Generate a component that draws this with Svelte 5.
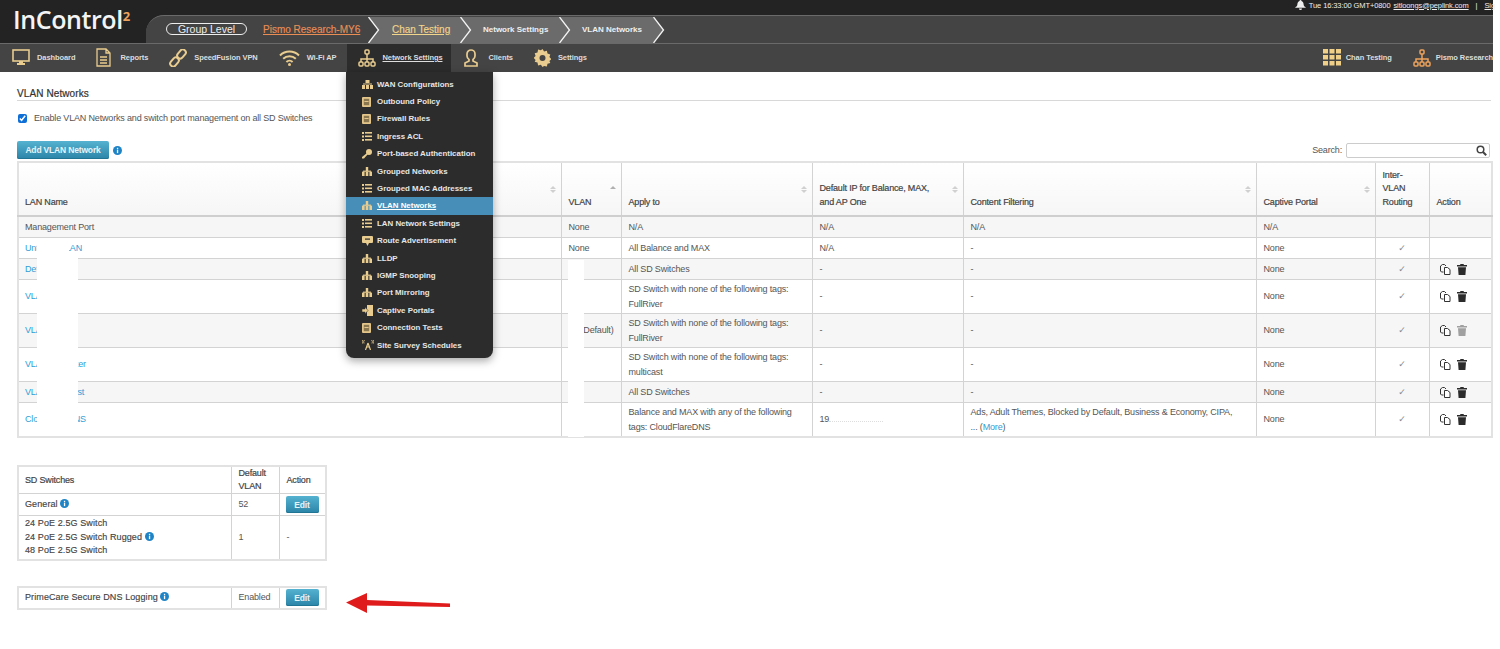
<script>
  const navItems = [
    { icon: 'monitor', label: 'Dashboard' },
    { icon: 'page', label: 'Reports' },
    { icon: 'link', label: 'SpeedFusion VPN' },
    { icon: 'wifi', label: 'Wi-Fi AP' },
    { icon: 'org', label: 'Network Settings', active: true },
    { icon: 'user', label: 'Clients' },
    { icon: 'gear', label: 'Settings' }
  ];

  const menuItems = [
    { icon: 'wan', label: 'WAN Configurations' },
    { icon: 'doc', label: 'Outbound Policy' },
    { icon: 'doc', label: 'Firewall Rules' },
    { icon: 'list', label: 'Ingress ACL' },
    { icon: 'key', label: 'Port-based Authentication' },
    { icon: 'net', label: 'Grouped Networks' },
    { icon: 'list', label: 'Grouped MAC Addresses' },
    { icon: 'net', label: 'VLAN Networks', active: true },
    { icon: 'list', label: 'LAN Network Settings' },
    { icon: 'route', label: 'Route Advertisement' },
    { icon: 'net', label: 'LLDP' },
    { icon: 'net', label: 'IGMP Snooping' },
    { icon: 'net', label: 'Port Mirroring' },
    { icon: 'portal', label: 'Captive Portals' },
    { icon: 'doc', label: 'Connection Tests' },
    { icon: 'survey', label: 'Site Survey Schedules' }
  ];

  const allSd = 'All SD Switches';
  const noneFull = 'SD Switch with none of the following tags: FullRiver';

  const rows = [
    { name: 'Management Port', vlan: 'None', apply: 'N/A', ip: 'N/A', filter: 'N/A', portal: 'N/A', plain: true },
    { name: 'Untagged LAN', link: true, vlan: 'None', apply: 'All Balance and MAX', ip: 'N/A', filter: '-', portal: 'None', check: true },
    { name: 'Default', link: true, vlan: '', apply: allSd, ip: '-', filter: '-', portal: 'None', check: true, actions: true },
    { name: 'VLAN', link: true, vlan: '', apply: noneFull, ip: '-', filter: '-', portal: 'None', check: true, actions: true, tall: true },
    { name: 'VLAN', link: true, vlan: '52 (Default)', apply: noneFull, ip: '-', filter: '-', portal: 'None', check: true, actions: true, tall: true, locked: true },
    { name: 'VLAN Repeater', link: true, vlan: '', apply: 'SD Switch with none of the following tags: multicast', ip: '-', filter: '-', portal: 'None', check: true, actions: true, tall: true },
    { name: 'VLAN Multicast', link: true, vlan: '', apply: allSd, ip: '-', filter: '-', portal: 'None', check: true, actions: true },
    { name: 'CloudFlareDNS', link: true, vlan: '', apply: 'Balance and MAX with any of the following tags: CloudFlareDNS', ip: 'masked', filter: 'more', portal: 'None', check: true, actions: true, tall: true }
  ];
</script>

{#snippet icon(kind)}
  {#if kind === 'monitor'}
    <svg width="18" height="17" viewBox="0 0 18 17"><rect x="1" y="1" width="16" height="11" fill="none" stroke="#e9cc8f" stroke-width="1.6"/><path d="M7 12h4v2h2v2H5v-2h2z" fill="#e9cc8f"/></svg>
  {:else if kind === 'page'}
    <svg width="17" height="19" viewBox="0 0 17 19"><path d="M1 1h9l4 4v13H1zM10 1v4h4M4 9h7M4 12h7M4 15h7" fill="none" stroke="#e9cc8f" stroke-width="1.3"/></svg>
  {:else if kind === 'link'}
    <svg width="18" height="18" viewBox="0 0 18 18"><g fill="none" stroke="#e9cc8f" stroke-width="2"><rect x="9.5" y="0" width="6" height="10" rx="3" transform="rotate(40 12.5 5)"/><rect x="2.5" y="8" width="6" height="10" rx="3" transform="rotate(40 5.5 13)"/></g></svg>
  {:else if kind === 'wifi'}
    <svg width="21" height="16" viewBox="0 0 21 16"><g fill="none" stroke="#e9cc8f" stroke-width="2"><path d="M1 5.5a13.5 13.5 0 0 1 19 0"/><path d="M4.2 8.8a9 9 0 0 1 12.6 0"/><path d="M7.4 12a4.5 4.5 0 0 1 6.2 0"/></g><circle cx="10.5" cy="14.5" r="1.5" fill="#e9cc8f"/></svg>
  {:else if kind === 'org' || kind === 'orgOrange'}
    <svg class:orange={kind === 'orgOrange'} class="org" width="18" height="18" viewBox="0 0 18 18"><g fill="none" stroke="currentColor" stroke-width="1.5"><rect x="7" y="1" width="4" height="4" rx="1"/><path d="M9 5v5M3 13v-3h12v3M9 10v3"/><rect x="1" y="13" width="4" height="4" rx="1"/><rect x="7" y="13" width="4" height="4" rx="1"/><rect x="13" y="13" width="4" height="4" rx="1"/></g></svg>
  {:else if kind === 'user'}
    <svg width="17" height="18" viewBox="0 0 17 18"><path d="M7 1a4 4 0 0 1 4 4v2a4 4 0 0 1-2 3.4V12l4 2v3H1v-3l4-2v-1.6A4 4 0 0 1 3 7V5a4 4 0 0 1 4-4z" fill="none" stroke="#e9cc8f" stroke-width="1.7"/></svg>
  {:else if kind === 'gear'}
    <svg width="17" height="18" viewBox="0 0 17 18"><path d="M8.5 0l1.6 2.4 2.8-.6.6 2.8 2.8.8-.9 2.7 2 2-2 2 .9 1.9-2.8.8-.6 2.8-2.8-.6L8.5 18l-1.6-2.2-2.8.6-.6-2.8-2.8-.8.9-1.9-2-2 2-2-.9-2.7 2.8-.8.6-2.8 2.8.6z" fill="#e9cc8f"/><circle cx="8.5" cy="9" r="3" fill="#444"/></svg>
  {:else if kind === 'grid'}
    <svg width="18" height="17" viewBox="0 0 18 17" fill="#f0d088"><rect width="5" height="4.5"/><rect x="6.5" width="5" height="4.5"/><rect x="13" width="5" height="4.5"/><rect y="6" width="5" height="4.5"/><rect x="6.5" y="6" width="5" height="4.5"/><rect x="13" y="6" width="5" height="4.5"/><rect y="12" width="5" height="4.5"/><rect x="6.5" y="12" width="5" height="4.5"/><rect x="13" y="12" width="5" height="4.5"/></svg>
  {:else if kind === 'wan'}
    <svg width="11" height="9" viewBox="0 0 11 9" fill="#e9cc8f"><rect x="3.5" width="4" height="3"/><rect y="5" width="3" height="4"/><rect x="4" y="5" width="3" height="4"/><rect x="8" y="5" width="3" height="4"/><rect x="1" y="3.5" width="9" height="1"/></svg>
  {:else if kind === 'doc'}
    <svg width="9" height="10" viewBox="0 0 9 10"><rect width="9" height="10" rx="1" fill="#e3c58a"/><rect x="1.800" y="1.800" width="5.400" height="6.400" fill="#8a7750"/><rect x="2.400" y="4" width="4.200" height="1" fill="#e3c58a"/></svg>
  {:else if kind === 'list'}
    <svg width="10" height="9" viewBox="0 0 10 9" fill="#e9cc8f"><rect width="2" height="2"/><rect x="3" width="7" height="1.6"/><rect y="3.5" width="2" height="2"/><rect x="3" y="3.5" width="7" height="1.6"/><rect y="7" width="2" height="2"/><rect x="3" y="7" width="7" height="1.6"/></svg>
  {:else if kind === 'key'}
    <svg width="10" height="10" viewBox="0 0 10 10" fill="#e9cc8f"><circle cx="7" cy="3" r="3"/><path d="M5 4l1 1-4 4.6H0V8z"/></svg>
  {:else if kind === 'net'}
    <svg width="10" height="9" viewBox="0 0 10 9" fill="#e9cc8f"><rect x="3.8" width="2.4" height="4"/><rect x="1" y="3.6" width="8" height="1.2"/><rect y="4.6" width="2.6" height="4.4"/><rect x="3.7" y="4.6" width="2.6" height="4.4"/><rect x="7.4" y="4.6" width="2.6" height="4.4"/></svg>
  {:else if kind === 'route'}
    <svg width="11" height="10" viewBox="0 0 11 10"><path d="M1 0h9a1 1 0 0 1 1 1v5a1 1 0 0 1-1 1H7L5.500 10 4 7H1a1 1 0 0 1-1-1V1a1 1 0 0 1 1-1z" fill="#e9cc8f"/><rect x="3" y="2.500" width="5" height="1.200" fill="#2c2c2c"/></svg>
  {:else if kind === 'portal'}
    <svg width="11" height="11" viewBox="0 0 11 11" fill="#e9cc8f"><rect x="5" width="6" height="11"/><path d="M0 4h3V2l3 3.500-3 3.500V7H0z" stroke="#2c2c2c" stroke-width=".5"/></svg>
  {:else if kind === 'survey'}
    <svg width="12" height="10" viewBox="0 0 12 10" fill="none" stroke="#e9cc8f"><path d="M6 3L3.500 10M6 3l2.500 7M4.500 7h3" stroke-width="1.200"/><path d="M2.500 0Q1 1.500 2 3.500M9.500 0Q11 1.500 10 3.500M.8 0Q-.4 1.800.5 3.500M11.200 0Q12.400 1.800 11.500 3.500" stroke-width=".8"/></svg>
  {/if}
{/snippet}

{#snippet info()}
  <svg class="info" width="9" height="9" viewBox="0 0 9 9"><circle cx="4.500" cy="4.500" r="4.500" fill="#1f84c6"/><rect x="3.900" y="3.700" width="1.300" height="3.400" fill="#fff"/><rect x="3.900" y="1.800" width="1.300" height="1.300" fill="#fff"/></svg>
{/snippet}

{#snippet sortArrows(upActive)}
  <span class="sort">
    <i class="up" class:on={upActive}></i>
    {#if !upActive}<i class="down"></i>{/if}
  </span>
{/snippet}

{#snippet chevron(fill)}
  <svg class="chev" width="12" height="26" viewBox="0 0 12 26">
    <path d="M0 0L10.500 13 0 26z" fill={fill}/>
    <path d="M0.500 0L10.500 13 0.500 26" fill="none" stroke="#f4f4f4" stroke-width="1.300"/>
  </svg>
{/snippet}

<div class="shell">
  <header class="header">
    <div class="top">
      <div class="logo">InControl<sup>2</sup></div>
      <div class="top-right">
        <div class="status">
          <svg width="11" height="10" viewBox="0 0 11 10"><path d="M5.500 0a1 1 0 0 1 1 1c2 .5 2 2.500 2.200 4 .1 1 1.300 1.800 2.300 2.800H0C1 6.800 2.200 6 2.300 5 2.500 3.500 2.500 1.500 4.500 1a1 1 0 0 1 1-1zM4 8.400h3a1.500 1.500 0 0 1-3 0z" fill="#eee"/></svg>
          <span>Tue 16:33:00 GMT+0800</span>
          <a href="#top" class="mail">sitloongs@peplink.com</a>
          <span class="pipe">|</span>
          <a href="#top" class="mail">Sig</a>
        </div>
        <div class="tab">
          <span class="pill">Group Level</span>
          <a href="#top" class="crumb-org">Pismo Research-MY6</a>
          <div class="trail">
            {@render chevron('#444')}
            <a href="#top" class="crumb-group">Chan Testing</a>
            {@render chevron('none')}
            <span class="crumb">Network Settings</span>
            {@render chevron('none')}
            <span class="crumb">VLAN Networks</span>
          </div>
          {@render chevron('#6b6b6b')}
        </div>
      </div>
    </div>

    <nav class="nav">
      {#each navItems as item}
        <div class="nav-item" class:active={item.active}>
          {@render icon(item.icon)}
          <span>{item.label}</span>
        </div>
      {/each}
      <div class="nav-right">
        <div class="nav-item">{@render icon('grid')}<span>Chan Testing</span></div>
        <div class="nav-item">{@render icon('orgOrange')}<span>Pismo Research</span></div>
      </div>

      <ul class="menu">
        {#each menuItems as item}
          <li class:current={item.active}>
            <span class="menu-icon">{@render icon(item.icon)}</span>
            <span class="menu-label">{item.label}</span>
          </li>
        {/each}
      </ul>
    </nav>
  </header>

  <main class="page">
    <h2 class="title">VLAN Networks</h2>
    <label class="enable">
      <input type="checkbox" checked />
      <span>Enable VLAN Networks and switch port management on all SD Switches</span>
    </label>

    <div class="toolbar">
      <button class="btn add">Add VLAN Network</button>
      {@render info()}
      <div class="search">
        <span>Search:</span>
        <div class="search-box">
          <svg width="11" height="11" viewBox="0 0 11 11"><circle cx="4.500" cy="4.500" r="3.300" fill="none" stroke="#444" stroke-width="1.500"/><path d="M7 7l3.200 3.200" stroke="#444" stroke-width="2"/></svg>
        </div>
      </div>
    </div>

    <div class="table-wrap">
      <table class="grid main">
        <colgroup>
          <col style="width:543px" /><col style="width:60px" /><col style="width:191px" /><col style="width:151px" />
          <col style="width:293px" /><col style="width:119px" /><col style="width:54px" /><col style="width:63px" />
        </colgroup>
        <thead>
          <tr>
            <th>LAN Name{@render sortArrows(false)}</th>
            <th>VLAN{@render sortArrows(true)}</th>
            <th>Apply to{@render sortArrows(false)}</th>
            <th>Default IP for Balance, MAX, and AP One{@render sortArrows(false)}</th>
            <th>Content Filtering{@render sortArrows(false)}</th>
            <th>Captive Portal{@render sortArrows(false)}</th>
            <th class="routing">Inter-VLAN Routing</th>
            <th>Action</th>
          </tr>
        </thead>
        <tbody>
          {#each rows as row, i}
            <tr class:tall={row.tall} class:shade={i === 0 || i === 2 || i === 4 || i === 6}>
              <td>{#if row.link}<a href="#top">{row.name}</a>{:else}{row.name}{/if}</td>
              <td class="vlan-cell">{row.vlan}</td>
              <td>{row.apply}</td>
              <td>
                {#if row.ip === 'masked'}19<span class="masked"></span>{:else}{row.ip}{/if}
              </td>
              <td>
                {#if row.filter === 'more'}
                  Ads, Adult Themes, Blocked by Default, Business &amp; Economy, CIPA,<br />... (<a href="#top">More</a>)
                {:else}{row.filter}{/if}
              </td>
              <td>{row.portal}</td>
              <td class="center">{#if row.check}<span class="tick">✓</span>{/if}</td>
              <td>
                {#if row.actions}
                  <div class="actions">
                    <svg width="11" height="11" viewBox="0 0 11 11" fill="none" stroke="#333" stroke-width="1"><path d="M3.500 8H1.500L.5 7V2L2.500.5h2L6 2"/><path d="M4.500 3.500h3l2.500 2V10.500H4.500z" fill="#fff"/></svg>
                    <svg class:locked={row.locked} class="trash" width="10" height="11" viewBox="0 0 10 11"><path d="M3.500 0h3l.5 1h3v1.500H0V1h3zM1 3.200h8L8.400 11H1.600z" fill="currentColor"/></svg>
                  </div>
                {/if}
              </td>
            </tr>
          {/each}
        </tbody>
      </table>
      <div class="mask mask-a"></div>
      <div class="mask mask-b"></div>
      <div class="mask mask-c"></div>
    </div>

    <table class="grid side switches">
      <colgroup><col style="width:213px" /><col style="width:48px" /><col style="width:47px" /></colgroup>
      <thead>
        <tr><th>SD Switches</th><th>Default VLAN</th><th>Action</th></tr>
      </thead>
      <tbody>
        <tr class="edit-row">
          <td class="strong">General {@render info()}</td>
          <td>52</td>
          <td class="btn-cell"><button class="btn edit">Edit</button></td>
        </tr>
        <tr>
          <td class="strong stack">24 PoE 2.5G Switch<br />24 PoE 2.5G Switch Rugged {@render info()}<br />48 PoE 2.5G Switch</td>
          <td>1</td>
          <td>-</td>
        </tr>
      </tbody>
    </table>

    <div class="logging">
      <table class="grid side">
        <colgroup><col style="width:213px" /><col style="width:48px" /><col style="width:47px" /></colgroup>
        <tbody>
          <tr class="edit-row">
            <td class="strong">PrimeCare Secure DNS Logging {@render info()}</td>
            <td>Enabled</td>
            <td class="btn-cell"><button class="btn edit">Edit</button></td>
          </tr>
        </tbody>
      </table>
      <svg class="arrow" width="105" height="22" viewBox="0 0 105 22">
        <path d="M0 10.500L21 1V8L104 11.500V15L21 13.500V21z" fill="#e01b1b"/>
      </svg>
    </div>
  </main>
</div>

<style>
  :global(body) {
    margin: 0;
    background: #fff;
    overflow: hidden;
  }

  .shell {
    width: 1493px;
    font-family: "Liberation Sans", Arial, sans-serif;
    font-size: 9px;
    color: #555;
  }

  a {
    color: #2e9ed6;
    text-decoration: none;
  }

  /* header */
  .header {
    background: #232323;
  }

  .top {
    display: flex;
    height: 43px;
  }

  .logo {
    width: 146px;
    box-sizing: border-box;
    padding: 3px 0 0 13px;
    font-family: "Open Sans", sans-serif;
    font-size: 25px;
    font-weight: 600;
    line-height: 32px;
    letter-spacing: -0.4px;
    color: #f4f4f4;
    white-space: nowrap;
  }

  .logo sup {
    font-size: 13px;
    line-height: 0;
    color: #eda25c;
    font-weight: 700;
    vertical-align: 8px;
  }

  .top-right {
    flex: 1;
    display: flex;
    flex-direction: column;
    min-width: 0;
  }

  .status {
    height: 15px;
    display: flex;
    align-items: center;
    justify-content: flex-end;
    gap: 3px;
    padding-bottom: 5px;
    box-sizing: border-box;
    margin-right: -2px;
    font-size: 7.500px;
    letter-spacing: -0.1px;
    color: #eee;
    white-space: nowrap;
  }

  .status .mail {
    color: #eee;
    text-decoration: underline;
  }

  .status .pipe {
    margin: 0 4px;
  }

  .tab {
    flex: 1;
    display: flex;
    align-items: flex-end;
    background: #444;
    border-top: 1px solid #6a6a6a;
    border-top-left-radius: 18px;
    padding-left: 20px;
  }

  .pill {
    align-self: center;
    margin-top: -1px;
    width: 81px;
    height: 12px;
    box-sizing: border-box;
    border: 1px solid #eee;
    border-radius: 7px;
    color: #eee;
    font-size: 10.500px;
    line-height: 10px;
    text-align: center;
  }

  .crumb-org {
    align-self: center;
    margin-left: 16px;
    width: 105px;
    color: #e98d55;
    font-size: 10px;
    -webkit-text-stroke: 0.15px #e98d55;
    text-decoration: underline;
    white-space: nowrap;
  }

  .trail {
    display: flex;
    align-items: center;
    height: 26px;
    background: #6b6b6b;
    white-space: nowrap;
  }

  .crumb-group {
    margin: 0 10px 2px 12px;
    width: 58px;
    color: #f1d58a;
    font-size: 10px;
    -webkit-text-stroke: 0.15px #f1d58a;
    text-decoration: underline;
  }

  .crumb {
    margin: 0 10px 2px 11px;
    color: #f0f0f0;
    font-size: 8px;
    font-weight: 700;
    width: 66px;
  }

  .trail .crumb:last-child {
    width: 61px;
  }

  .chev {
    display: block;
    flex: none;
  }

  /* nav */
  .nav {
    position: relative;
    display: flex;
    align-items: center;
    height: 29px;
    background: #444;
    border-top: 1px solid #6a6a6a;
    box-sizing: border-box;
    padding: 0 0 1px 12px;
  }

  .nav-item {
    display: flex;
    align-items: center;
    gap: 7px;
    margin-right: 21px;
    color: #ddd;
    font-size: 7.500px;
    font-weight: 700;
    letter-spacing: -0.08px;
    white-space: nowrap;
  }

  .nav-item.active {
    align-self: stretch;
    background: #2c2c2c;
    margin: 0 13px -1px -11px;
    padding: 0 9px 1px 11px;
  }

  .nav-item.active span {
    text-decoration: underline;
  }

  .org {
    color: #e9cc8f;
  }

  .org.orange {
    color: #eda25c;
  }

  .nav-right {
    margin-left: auto;
    display: flex;
  }

  .nav-right .nav-item {
    gap: 5px;
  }

  .nav-right .nav-item:last-child {
    margin-right: 0;
  }

  /* dropdown */
  .menu {
    position: absolute;
    left: 346px;
    top: 28px;
    width: 147px;
    margin: 0;
    padding: 3.500px 0 4px;
    list-style: none;
    background: #2c2c2c;
    border-radius: 0 0 8px 8px;
    box-shadow: 0 3px 8px rgba(0, 0, 0, 0.35);
    z-index: 5;
  }

  .menu li {
    display: flex;
    align-items: center;
    height: 17.400px;
    color: #e6e6e6;
    font-size: 7.900px;
    font-weight: 700;
    white-space: nowrap;
  }

  .menu li.current {
    background: #478fb8;
    color: #fff;
  }

  .menu li.current .menu-label {
    text-decoration: underline;
  }

  .menu-icon {
    width: 31px;
    padding-left: 16px;
    box-sizing: border-box;
    display: flex;
    align-items: center;
  }

  /* page */
  .page {
    padding-left: 17px;
    letter-spacing: -0.17px;
  }

  .title {
    margin: 16px 0 0;
    width: 1474px;
    border-bottom: 1px solid #d8d8d8;
    font-size: 10px;
    line-height: 12px;
    letter-spacing: 0.1px;
    font-weight: 400;
    color: #333;
    -webkit-text-stroke: 0.2px #333;
  }

  .enable {
    display: flex;
    align-items: center;
    gap: 7px;
    margin-top: 11px;
    height: 12px;
  }

  .enable input {
    margin: 0 0 0 1px;
    width: 9px;
    height: 9px;
    accent-color: #0f6fd6;
  }

  .toolbar {
    display: flex;
    align-items: center;
    gap: 4px;
    margin-top: 17px;
    width: 1473px;
    height: 18px;
  }

  .btn {
    display: block;
    border: 0;
    border-radius: 2px;
    padding: 0;
    font-family: inherit;
    font-size: 8.500px;
    font-weight: 700;
    letter-spacing: inherit;
    color: #e6f3f8;
    background: linear-gradient(#55b2d0, #2a84a8);
    box-shadow: inset 0 -1px 0 #217594;
  }

  .add {
    width: 92px;
    height: 18px;
  }

  .info {
    display: inline-block;
    vertical-align: -1px;
  }

  .search {
    margin-left: auto;
    display: flex;
    align-items: center;
    gap: 4px;
  }

  .search-box {
    width: 144px;
    height: 15px;
    box-sizing: border-box;
    border: 1px solid #ccc;
    border-radius: 2px;
    display: flex;
    align-items: center;
    justify-content: flex-end;
    padding-right: 2px;
  }

  .table-wrap {
    position: relative;
    margin-top: 2px;
    width: 1474px;
  }

  .grid {
    border-collapse: collapse;
    table-layout: fixed;
    border: 2px solid #e2e2e2;
  }

  .grid.main {
    width: 1474px;
  }

  .grid th,
  .grid td {
    border: 1px solid #d3d3d3;
    padding: 0 7px;
    line-height: 14.500px;
    text-align: left;
    vertical-align: middle;
  }

  .grid th:first-child,
  .grid td:first-child {
    padding-left: 6px;
  }

  .main thead th {
    position: relative;
    height: 46px;
    vertical-align: bottom;
    padding-bottom: 6px;
    padding-right: 20px;
    line-height: 13.500px;
    color: #444;
    font-weight: 400;
    -webkit-text-stroke: 0.2px #444;
    background: linear-gradient(#fff, #f6f6f6);
    border-bottom: 2px solid #cfcfcf;
  }

  .main thead th.routing {
    padding-right: 4px;
  }

  .main td {
    height: 20px;
  }

  .main tr.tall td {
    height: 33px;
  }

  .main tr.shade td {
    background: #f6f6f6;
  }

  .vlan-cell {
    white-space: nowrap;
  }

  .center {
    text-align: center !important;
  }

  .tick {
    font-family: "DejaVu Sans", sans-serif;
    color: #888;
  }

  .masked {
    display: inline-block;
    width: 54px;
    border-bottom: 1px dotted #ddd;
  }

  .actions {
    display: flex;
    align-items: center;
    gap: 6px;
    padding-left: 3px;
  }

  .trash {
    color: #2b2b2b;
  }

  .trash.locked {
    color: #a0a0a0;
  }

  .sort {
    position: absolute;
    right: 5px;
    top: 50%;
    margin-top: -3px;
    display: flex;
    flex-direction: column;
    gap: 1px;
  }

  .sort i {
    display: block;
    width: 0;
    height: 0;
    border-left: 3px solid transparent;
    border-right: 3px solid transparent;
  }

  .sort .up {
    border-bottom: 3.500px solid #d0d0d0;
  }

  .sort .up.on {
    border-bottom-color: #b0b0b0;
  }

  .sort .down {
    border-top: 3.500px solid #d0d0d0;
  }

  .mask {
    position: absolute;
    background: #fff;
  }

  .mask-a {
    left: 20px;
    top: 82px;
    width: 32px;
    height: 15px;
  }

  .mask-b {
    left: 20px;
    top: 96px;
    width: 41px;
    height: 178px;
  }

  .mask-c {
    left: 551px;
    top: 99px;
    width: 16px;
    height: 177px;
  }

  .side {
    width: 308px;
  }

  .switches {
    margin-top: 27px;
  }

  .side th {
    height: 26px;
    line-height: 13px;
    font-weight: 400;
    color: #444;
    -webkit-text-stroke: 0.2px #444;
  }

  .side .strong {
    color: #444;
    line-height: 13.500px;
    letter-spacing: 0.1px;
    -webkit-text-stroke: 0.15px #444;
  }

  .side .stack {
    padding-top: 1px;
    padding-bottom: 1px;
  }

  .edit-row td {
    height: 21px;
  }

  .logging .edit-row td {
    height: 20px;
  }

  .btn-cell {
    padding: 0 6px !important;
  }

  .edit {
    width: 33px;
    height: 17px;
  }

  .logging {
    display: flex;
    align-items: flex-start;
    margin-top: 25px;
  }

  .arrow {
    display: block;
    margin: 6px 0 0 19px;
  }
</style>
